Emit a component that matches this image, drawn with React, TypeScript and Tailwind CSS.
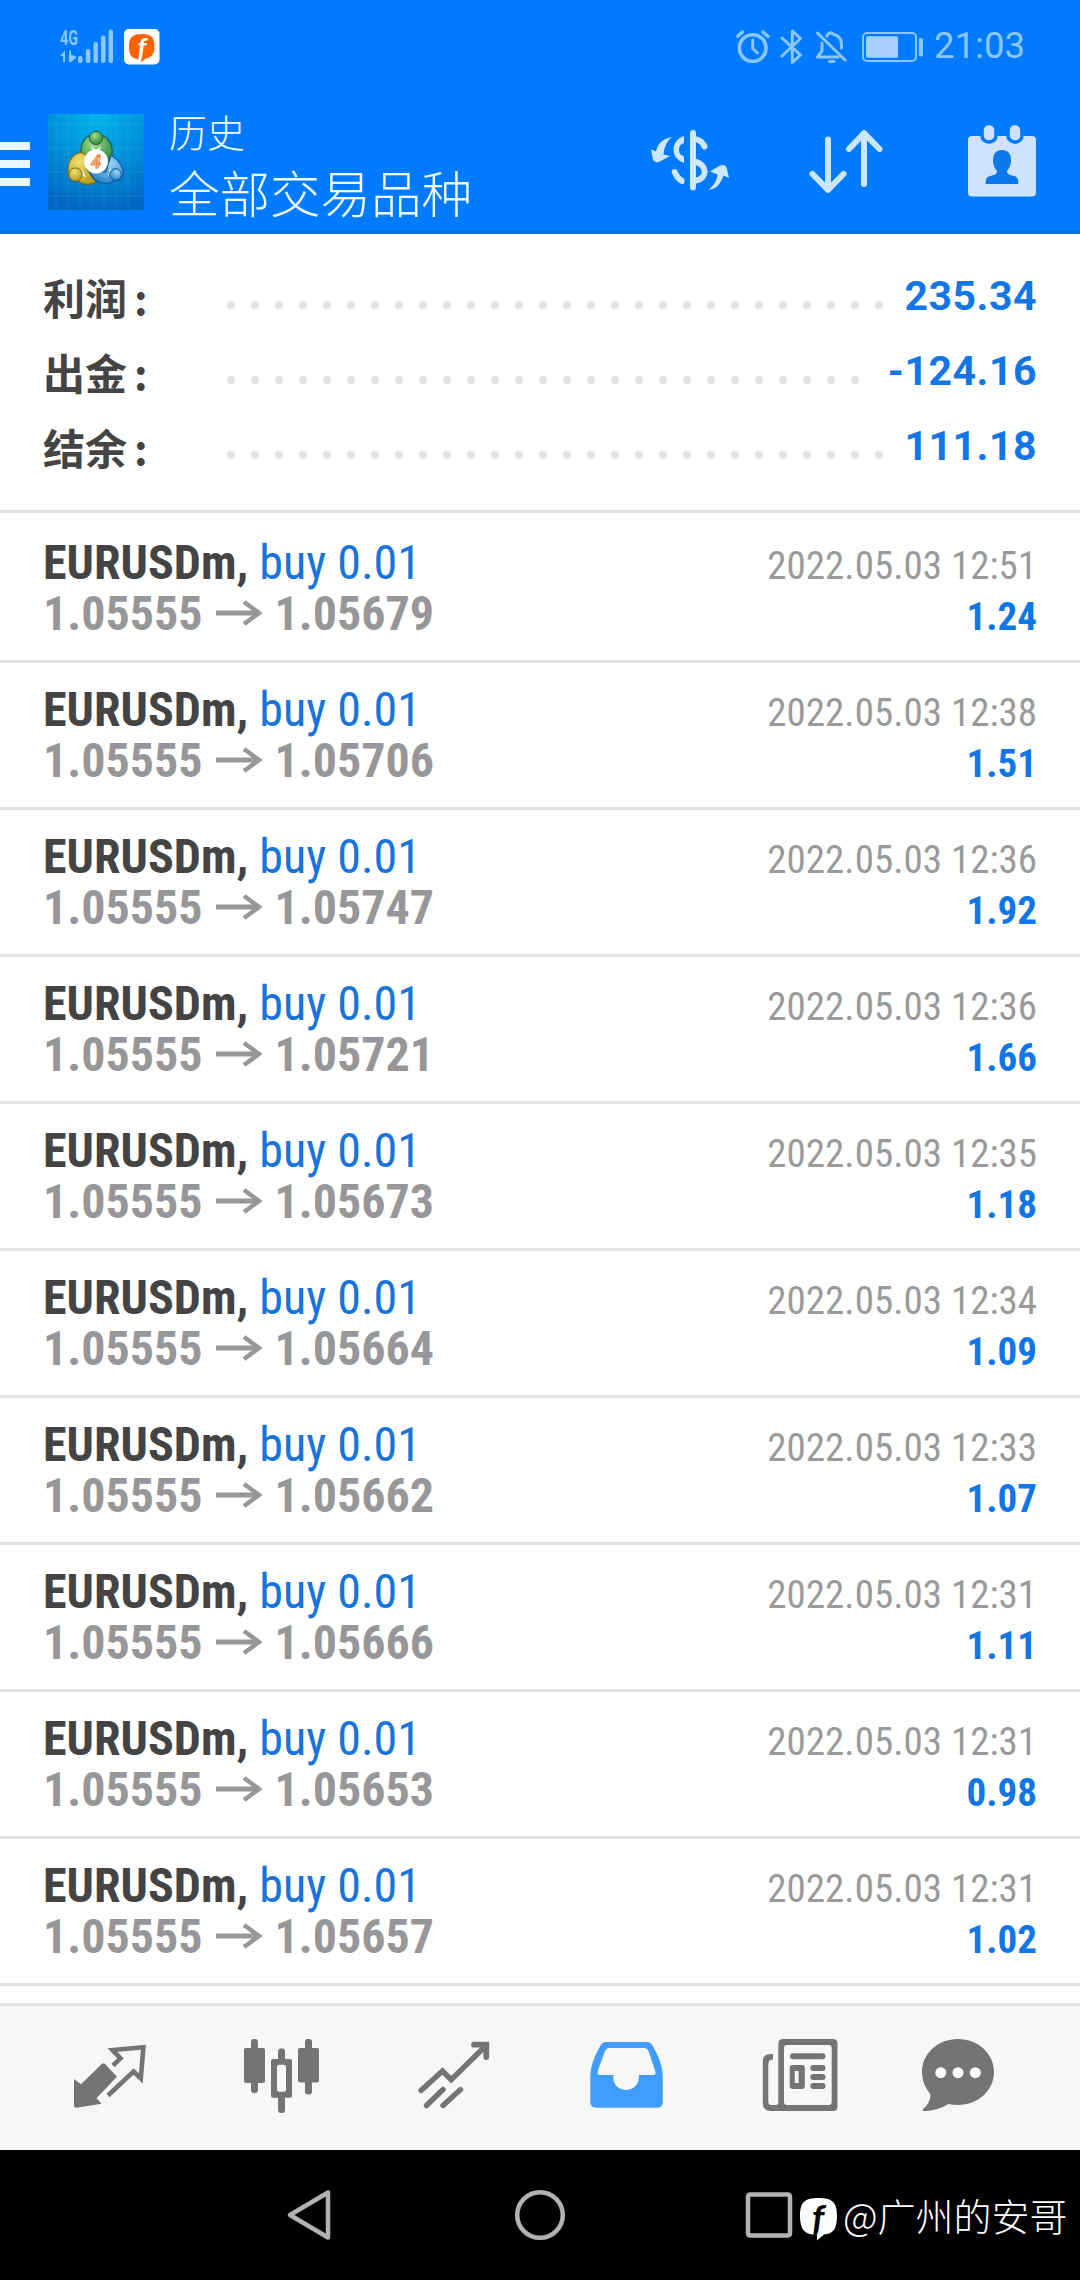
import { useState } from 'react';
import clsx from 'clsx';

interface Deal {
  id: number;
  symbol: string;
  side: string;
  volume: string;
  open: string;
  close: string;
  time: string;
  profit: string;
}

interface SummaryItem {
  label: string;
  value: string;
  dots: number;
}

const summary: SummaryItem[] = [
  { label: '利润', value: '235.34', dots: 28 },
  { label: '出金', value: '-124.16', dots: 27 },
  { label: '结余', value: '111.18', dots: 28 },
];

const rows = [
  ['1.05679', '12:51', '1.24'],
  ['1.05706', '12:38', '1.51'],
  ['1.05747', '12:36', '1.92'],
  ['1.05721', '12:36', '1.66'],
  ['1.05673', '12:35', '1.18'],
  ['1.05664', '12:34', '1.09'],
  ['1.05662', '12:33', '1.07'],
  ['1.05666', '12:31', '1.11'],
  ['1.05653', '12:31', '0.98'],
  ['1.05657', '12:31', '1.02'],
];

const deals: Deal[] = rows.map(([close, time, profit], i) => ({
  id: i,
  symbol: 'EURUSDm',
  side: 'buy',
  volume: '0.01',
  open: '1.05555',
  close,
  time: `2022.05.03 ${time}`,
  profit,
}));

function SignalIcon() {
  return (
    <svg viewBox="0 0 54 36" className="w-[54px] h-9" fill="#8cc6ff">
      <text x="0" y="15.5" fontSize="21" fontWeight="700" textLength="18" lengthAdjust="spacingAndGlyphs" fontFamily="Roboto, sans-serif">4G</text>
      <path d="M0 27 L5 21.5 V33 H3 V27Z M9 21.5 H11 V25.5 L17 28 L11 33 H9Z" />
      <rect x="18" y="27" width="4.5" height="7" rx="2" />
      <rect x="25.8" y="20" width="4.5" height="14" rx="2" />
      <rect x="33.4" y="13" width="4.5" height="21" rx="2" />
      <rect x="41" y="6.5" width="4.5" height="27.5" rx="2" />
      <rect x="48.5" y="0.5" width="4.5" height="33.5" rx="2" />
    </svg>
  );
}

function AppBadge() {
  return (
    <svg viewBox="0 0 36 36" className="w-9 h-9">
      <rect width="35.5" height="35.5" rx="5" fill="#fff" />
      <path d="M18 5 C27 5 30.5 8 30.5 17 C30.5 25 28 28.5 21 30 L17.5 33 L17 30.5 C8 30 5 27 5 17.5 C5 8 9 5 18 5Z" fill="#ff6300" />
      <text x="18" y="27.5" textAnchor="middle" fontSize="27" fontWeight="700" fontStyle="italic" fontFamily="Lato, sans-serif" fill="#fff">f</text>
    </svg>
  );
}

function AlarmIcon() {
  return (
    <svg viewBox="0 0 36 36" className="w-9 h-9" fill="none" stroke="#8cc6ff" strokeLinecap="round">
      <circle cx="17.7" cy="19" r="13.3" strokeWidth="3.6" />
      <path d="M17.7 11 V19.5 L22.5 24" strokeWidth="3" />
      <path d="M3 7 L7.5 3 M28 3 L33 7.5" strokeWidth="3.4" />
    </svg>
  );
}

function BluetoothIcon() {
  return (
    <svg viewBox="0 0 24 36" className="w-6 h-9" fill="none" stroke="#8cc6ff" strokeWidth="3" strokeLinejoin="round" strokeLinecap="round">
      <path d="M2 9 L20.5 26 L12.3 33.5 V2 L20.5 9.5 L2 27" />
    </svg>
  );
}

function BellOffIcon() {
  return (
    <svg viewBox="0 0 34 36" className="w-[34px] h-9" fill="none" stroke="#8cc6ff" strokeWidth="3" strokeLinecap="round">
      <path d="M3.5 4 L31 31" />
      <path d="M8 14 V22 L3.5 28 H24" strokeLinejoin="round" />
      <path d="M13 7 Q15 2 19 5 C26 7 28 11 27.5 19" />
      <path d="M15.5 32.5 H20" />
    </svg>
  );
}

function BatteryIcon() {
  return (
    <svg viewBox="0 0 62 32" className="w-[62px] h-8">
      <rect x="1" y="2" width="53" height="28" rx="4" fill="none" stroke="#8cc6ff" strokeWidth="2" />
      <rect x="4" y="5.2" width="32" height="21.6" rx="1.5" fill="#a6cfff" />
      <rect x="56.8" y="7" width="4.2" height="18.5" rx="2" fill="#8cc6ff" />
    </svg>
  );
}

function Logo() {
  return (
    <svg viewBox="0 0 96 96" className="w-24 h-24">
      <defs>
        <radialGradient id="logoBg" cx="0.52" cy="0" r="1">
          <stop offset="0" stopColor="#00b4ea" />
          <stop offset="0.5" stopColor="#0091dc" />
          <stop offset="1" stopColor="#0068c2" />
        </radialGradient>
        <radialGradient id="green" cx="0.4" cy="0.3" r="0.7">
          <stop offset="0" stopColor="#a5dc8a" />
          <stop offset="1" stopColor="#2b8a3e" />
        </radialGradient>
        <radialGradient id="yellow" cx="0.4" cy="0.3" r="0.7">
          <stop offset="0" stopColor="#f0e070" />
          <stop offset="1" stopColor="#b9a020" />
        </radialGradient>
        <radialGradient id="blue" cx="0.6" cy="0.3" r="0.7">
          <stop offset="0" stopColor="#9ad4f5" />
          <stop offset="1" stopColor="#2a86cc" />
        </radialGradient>
      </defs>
      <rect width="96" height="96" fill="url(#logoBg)" />
      <path d="M8 0V96M20 0V96M32 0V96M44 0V96M56 0V96M68 0V96M80 0V96M0 10H96M0 22H96M0 34H96M0 46H96M0 58H96M0 70H96M0 82H96" stroke="#fff" strokeOpacity="0.08" />
      <path d="M33 43 C31 28 39 20 48 20 C58 20 66 30 64 41 C60 50 56 50 54 52 L36 42Z" fill="url(#green)" stroke="#1c5f3f" strokeWidth="1.2" />
      <path d="M20 57 C20 46 25 39 34 38.5 L40 42 L38 54 L48 68 C41 72 34 70 30 67 C22 66 19 62 20 57Z" fill="url(#yellow)" stroke="#7a6a18" strokeWidth="1.2" />
      <path d="M63 41 C71 46 76 54 75 61 C73 67 69 67 66 67 C58 72 45 69 42 58 L58 58Z" fill="url(#blue)" stroke="#145a9c" strokeWidth="1.2" />
      <path d="M43 32 L48 36 L53 32 L51 38 H45Z M34 56 L32 61 L38 63Z M62 55 L60 62 L66 57Z" fill="#eef6f6" />
      <circle cx="48" cy="24" r="6.6" fill="url(#green)" stroke="#1c5f3f" />
      <circle cx="27.5" cy="60.5" r="6.6" fill="url(#yellow)" stroke="#7a6a18" />
      <circle cx="67.5" cy="60.5" r="5.8" fill="url(#blue)" stroke="#145a9c" />
      <circle cx="48" cy="47.5" r="12" fill="#fff" />
      <text x="48" y="54" textAnchor="middle" fontSize="18" fontWeight="700" fontStyle="italic" fontFamily="Roboto, sans-serif" fill="#fbd9b0" stroke="#e8823a" strokeWidth="0.9">4</text>
    </svg>
  );
}

function CurrencyIcon() {
  return (
    <svg viewBox="0 0 96 96" className="w-24 h-24" fill="#cfe6ff">
      <g fill="none" stroke="#cfe6ff" strokeWidth="6" strokeLinecap="round">
        <path d="M51 19 V73.5" />
        <path d="M32.7 58 Q35 64 39.5 66.8" />
        <path d="M55 25.5 Q60 27 62.5 32.5" />
        <path d="M54 48 C65 51 66 64 54 66.5" />
      </g>
      <path d="M42 22 C35 24 31.5 30 31.5 36 C31.5 42 36 47 42 49 V42.5 C38 41 37 38 37 35.5 C37 32 39 30 42 29Z" />
      <path d="M38 63 L42 64.5 V70.2 L38 69Z" />
      <path d="M29.7 23 C19 25 15.5 31 14 37.5 L9 35.3 L11 46 Q13 49 16.5 48.3 L28 42 L21.5 40.5 C22 34 25 27 29.7 23Z" />
      <path d="M66.3 76 C73 71 75 65 75.5 60.5 L68 57.5 L78 51.5 Q83 50 84.5 53 L87 64 L81.5 61.5 C79 68 76 75 66.3 76Z" />
    </svg>
  );
}

function SortIcon() {
  return (
    <svg viewBox="0 0 96 96" className="w-24 h-24" fill="none" stroke="#cbe7ff" strokeWidth="6" strokeLinecap="round" strokeLinejoin="round">
      <path d="M30 25.5 V75.5 M14.5 60 L30 75.8 L45.5 60" />
      <path d="M66 70 V19.5 M51 35 L66 19.2 L81.5 35" />
    </svg>
  );
}

function CalendarIcon() {
  return (
    <svg viewBox="0 0 96 96" className="w-24 h-24">
      <rect x="14" y="22" width="68" height="60.5" rx="4" fill="#cfe3ff" />
      <g fill="#cfe3ff" stroke="#007aff" strokeWidth="3.5">
        <rect x="28" y="9.5" width="14" height="18.5" rx="6.5" />
        <rect x="54" y="9.5" width="14" height="18.5" rx="6.5" />
      </g>
      <path d="M48 36 C54 36 57 40 57 46.5 C57 51 55.5 54 53 57 C53 60.5 56 61 60 62 C64 63 64.3 66 64.3 70 H31.7 C31.7 66 32 63 36 62 C40 61 43 60.5 43 57 C40.5 54 39 51 39 46.5 C39 40 42 36 48 36Z" fill="#0a78e8" />
    </svg>
  );
}

function QuotesIcon() {
  return (
    <svg viewBox="0 0 96 96" className="w-24 h-24" fill="currentColor">
      <path d="M12 49 L19 54.3 L40 33.8 Q41.3 32.5 42.8 33.8 L55 46.7 L34.4 68.3 L39.6 73.7 L14.4 77.7 Q12 77.7 12 75.5Z" />
      <path d="M51 35.5 L58.5 28.3 L50.5 20 L81.4 17.3 L78.8 48.5 L71.6 41.5 L46 65.5" fill="none" stroke="currentColor" strokeWidth="4.6" />
    </svg>
  );
}

function ChartIcon() {
  return (
    <svg viewBox="0 0 96 96" className="w-24 h-24" fill="currentColor">
      <rect x="10" y="18" width="21" height="35" rx="2" />
      <rect x="17" y="9" width="7" height="54" rx="3" />
      <rect x="44" y="18.5" width="7" height="64.5" rx="3" />
      <rect x="37" y="29" width="21" height="38.7" rx="2" />
      <rect x="43" y="34.7" width="9" height="27" rx="2.5" fill="#f7f7f7" />
      <rect x="64" y="18" width="21" height="34.4" rx="2" />
      <rect x="71" y="9" width="7" height="55.5" rx="3" />
    </svg>
  );
}

function TradeIcon() {
  return (
    <svg viewBox="0 0 96 96" className="w-24 h-24" fill="none" stroke="currentColor" strokeWidth="5.4" strokeLinecap="round">
      <path d="M15 60.5 L36.5 41 L45.2 49.6 L80 15.5" strokeLinejoin="miter" />
      <path d="M68 14.7 H80.3 V27" strokeWidth="5.8" />
      <path d="M20.5 75.5 L37 59.5 M37 75.5 L54.5 59.5" />
    </svg>
  );
}

function HistoryIcon() {
  return (
    <svg viewBox="0 0 96 96" className="w-24 h-24" fill="currentColor">
      <path
        fillRule="evenodd"
        d="M28 12 H69 Q72.5 12 74.5 15.5 Q84.8 33 84.8 46 V72 Q84.8 77.7 79 77.7 H18 Q12.3 77.7 12.3 72 V46 Q12.3 33 22.5 15.5 Q24.5 12 28 12Z M31 18 Q28.5 18 27 21 L20.2 39.5 Q18.5 45 22 45 H35.3 V47.5 C35.3 55 41 60 48 60 C55 60 60.8 55 60.8 47.5 V45 H75.5 Q78.5 45 77.2 41 L70.5 21 Q69 18 66.5 18Z"
      />
    </svg>
  );
}

function NewsIcon() {
  return (
    <svg viewBox="0 0 96 96" className="w-24 h-24" fill="currentColor">
      <path
        fillRule="evenodd"
        d="M33 9 H83 Q87.5 9 87.5 13.5 V76.5 Q87.5 81 83 81 H21 Q12.8 81 12.8 73 V31 Q12.8 24 21 24 H23 V29.5 Q18.3 29.5 18.3 34 V71 Q18.3 75 21 75 H26 Q28.3 75 28.3 72 V14 Q28.3 9 33 9Z M37 15 Q34 15 34 18 V72 Q34 75 37 75 H78.7 Q81.7 75 81.7 72 V18 Q81.7 15 78.7 15Z"
      />
      <rect x="40" y="23.2" width="35.5" height="6" rx="3" />
      <path fillRule="evenodd" d="M42.7 35 H52 Q54.8 35 54.8 38 V56 Q54.8 59 52 59 H42.7 Q39.7 59 39.7 56 V38 Q39.7 35 42.7 35Z M44.8 41 V53 H48.6 V41Z" />
      <rect x="60.3" y="35" width="15.2" height="6" rx="3" />
      <rect x="60.3" y="44" width="15.2" height="6" rx="3" />
      <rect x="60.3" y="53" width="15.2" height="6" rx="3" />
    </svg>
  );
}

function ChatIcon() {
  return (
    <svg viewBox="0 0 96 96" className="w-24 h-24">
      <path d="M36 9 C56 9 72 23.5 72 42 C72 60.5 56 75 36 75 Q31 75 26.5 74 Q14 81.5 1.5 81 Q0 80.5 1 79 Q8.5 73 8.5 64.5 Q0 54.5 0 42 C0 23.5 16 9 36 9Z" fill="currentColor" />
      <g fill="#fff">
        <circle cx="18.8" cy="42.7" r="5.5" />
        <circle cx="36" cy="42.7" r="5.5" />
        <circle cx="53.3" cy="42.7" r="5.5" />
      </g>
    </svg>
  );
}

const tabs = [
  { id: 'quotes', icon: QuotesIcon },
  { id: 'chart', icon: ChartIcon },
  { id: 'trade', icon: TradeIcon },
  { id: 'history', icon: HistoryIcon },
  { id: 'news', icon: NewsIcon },
  { id: 'chat', icon: ChatIcon },
];

function DealRow({ deal }: { deal: Deal }) {
  return (
    <div className="h-[147px] border-b-[3px] border-[#e4e4e4] pt-[21px] px-[43px] font-['Roboto_Condensed',Roboto,sans-serif] [font-stretch:75%]">
      <div className="flex items-baseline justify-between h-[51px] leading-[51px]">
        <p className="text-[48px] text-[#1874dc] whitespace-pre">
          <span className="font-bold text-[#444]">{deal.symbol}, </span>
          {deal.side} {deal.volume}
        </p>
        <p className="text-[39px] text-[#9a9a9a]">{deal.time}</p>
      </div>
      <div className="flex items-baseline justify-between h-[51px] leading-[51px]">
        <p className="flex items-baseline text-[48px] font-bold text-[#979799]">
          {deal.open}
          <svg viewBox="0 0 46 26" className="w-[46px] h-[26px] mx-[13px] relative -top-1" fill="none" stroke="currentColor">
            <path d="M0 13 H43" strokeWidth="5" />
            <path d="M28 2 L43 13 L28 24" strokeWidth="4.5" />
          </svg>
          {deal.close}
        </p>
        <p className="text-[39px] font-bold text-[#0f76e8]">{deal.profit}</p>
      </div>
    </div>
  );
}

export default function App() {
  const [active, setActive] = useState('history');

  return (
    <div className="relative w-[1080px] h-[2280px] bg-white overflow-hidden flex flex-col font-[Roboto,'Noto_Sans_CJK_SC',sans-serif]">
      <header className="h-[234px] shrink-0 bg-[#007aff] border-b-[3px] border-[#0a70d4]">
        <div className="h-[93px] flex items-center justify-between pl-[60px] pr-[55px]">
          <div className="flex items-center gap-[10px]">
            <SignalIcon />
            <AppBadge />
          </div>
          <div className="flex items-center text-[#8cc6ff]">
            <AlarmIcon />
            <span className="w-[9px]" />
            <BluetoothIcon />
            <span className="w-[10px]" />
            <BellOffIcon />
            <span className="w-[14px]" />
            <BatteryIcon />
            <span className="ml-[10px] text-[36.5px] leading-none">21:03</span>
          </div>
        </div>

        <div className="h-[138px] flex items-center">
          <button className="flex flex-col gap-[10px] pt-1">
            <span className="w-[30px] h-2 bg-[#e8f6ff]" />
            <span className="w-[30px] h-2 bg-[#e8f6ff]" />
            <span className="w-[30px] h-2 bg-[#e8f6ff]" />
          </button>
          <div className="ml-[18px]">
            <Logo />
          </div>
          <div className="ml-[25px] flex-1 text-[#eefaff] font-['Noto_Sans_CJK_SC',sans-serif] font-light">
            <p className="text-[38px] leading-[58px]">历史</p>
            <h1 className="text-[50.5px] leading-[62px]">全部交易品种</h1>
          </div>
          <div className="flex gap-[60px] pr-[30px]">
            <CurrencyIcon />
            <SortIcon />
            <CalendarIcon />
          </div>
        </div>
      </header>

      <section className="h-[279px] shrink-0 pt-[25px] px-[43px] border-b-[3px] border-[#e4e4e4] font-bold">
        {summary.map((item) => (
          <div key={item.label} className="h-[75px] flex items-center">
            <span className="w-[184px] text-[42px] text-[#444] font-['Noto_Sans_CJK_SC',sans-serif]">
              {item.label}
              <span className="ml-[7px]">:</span>
            </span>
            <span className="flex gap-4 pt-[17px]">
              {Array.from({ length: item.dots }, (_, i) => (
                <span key={i} className="w-2 h-2 rounded-full bg-[#e2e2e2]" />
              ))}
            </span>
            <span className="ml-auto text-[41px] tracking-[0.5px] text-[#1276e6]">{item.value}</span>
          </div>
        ))}
      </section>

      <main className="flex-1 pt-[3px] overflow-hidden">
        {deals.map((deal) => (
          <DealRow key={deal.id} deal={deal} />
        ))}
      </main>

      <nav className="h-[147px] shrink-0 flex items-center gap-[76px] pl-[62px] bg-[#f7f7f7] border-t-[3px] border-[#e2e2e2]">
        {tabs.map(({ id, icon: Icon }) => (
          <button
            key={id}
            onClick={() => setActive(id)}
            className={clsx(active === id ? 'text-[#409cff]' : 'text-[#747474]')}
          >
            <Icon />
          </button>
        ))}
      </nav>

      <footer className="h-[130px] shrink-0 bg-black flex items-center justify-center gap-[170px]">
        <svg viewBox="0 0 60 60" className="w-[60px] h-[60px]" fill="none" stroke="#b2b2b2" strokeWidth="4.5" strokeLinejoin="round">
          <path d="M10 30 L48 7.5 V52.5Z" />
        </svg>
        <svg viewBox="0 0 60 60" className="w-[60px] h-[60px]" fill="none" stroke="#b2b2b2" strokeWidth="4.5">
          <circle cx="30" cy="30" r="22.8" />
        </svg>
        <svg viewBox="0 0 60 60" className="w-[60px] h-[60px]" fill="none" stroke="#b2b2b2" strokeWidth="4.5">
          <rect x="8" y="9.5" width="42" height="41" rx="2" />
        </svg>
      </footer>

      <div className="absolute left-[800px] top-[2188px] flex items-center gap-[6px] whitespace-nowrap text-white">
        <svg viewBox="0 0 37 44" className="w-[37px] h-[44px] relative top-1">
          <path d="M18.5 1 C32 1 37 5 37 19 C37 32 33 37 24 37.5 L17 43.5 L17 37.8 C5 38 0 33 0 19 C0 5 5 1 18.5 1Z" fill="#fff" />
          <text x="18" y="34" textAnchor="middle" fontSize="37" fontWeight="700" fontStyle="italic" fontFamily="Lato, sans-serif" fill="#000">f</text>
        </svg>
        <span className="text-[38px] leading-[54px] font-light font-['Noto_Sans_CJK_SC',sans-serif]">@广州的安哥</span>
      </div>
    </div>
  );
}
